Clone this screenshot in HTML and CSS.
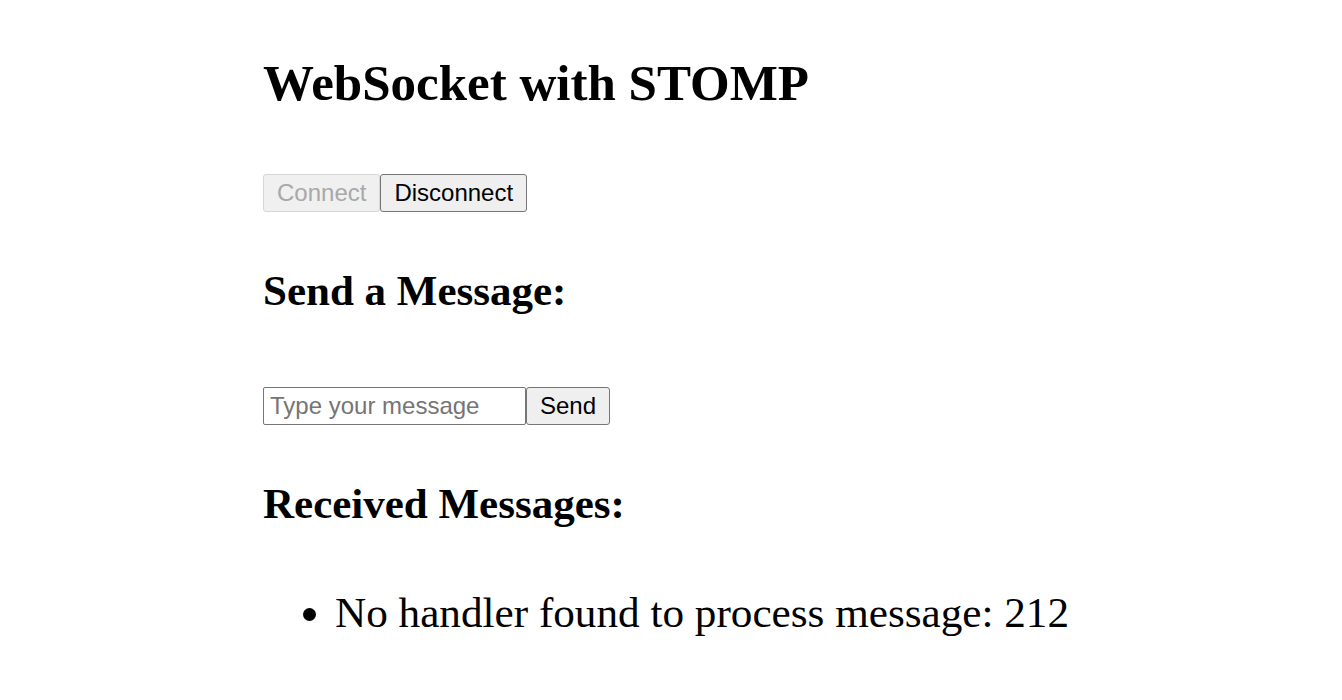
FILE: index.html
```html
<!DOCTYPE html>
<html lang="en">
<head>
<meta charset="utf-8">
<title>WebSocket with STOMP</title>
<link rel="stylesheet" href="styles.css">
</head>
<body>
<div class="page">
  <h1 class="title">WebSocket with STOMP</h1>
  <div class="row controls"><button class="btn" disabled>Connect</button><button class="btn">Disconnect</button></div>
  <h2 class="section">Send a Message:</h2>
  <div class="row sender"><input class="msg-input" type="text" placeholder="Type your message"><button class="btn">Send</button></div>
  <h2 class="section received">Received Messages:</h2>
  <ul class="messages">
    <li class="message">No handler found to process message: 212</li>
  </ul>
</div>
</body>
</html>
```
FILE: styles.css
```css
html, body {
  margin: 0;
  padding: 0;
  background: #ffffff;
}
body {
  font-family: "Liberation Serif", "Times New Roman", serif;
  color: #000000;
}
.page {
  width: 816px;
  margin: 0 auto;
  padding-top: 54px;
}
.title {
  margin: 0;
  font-size: 51px;
  line-height: 58px;
  font-weight: bold;
}
.row {
  display: flex;
  align-items: flex-start;
}
.controls {
  margin-top: 62px;
}
.btn {
  font-family: "Liberation Sans", Arial, sans-serif;
  font-size: 24px;
  line-height: 28px;
  padding: 4px 13px;
  margin: 0;
  border: 1px solid #767676;
  border-radius: 3px;
  background: #efefef;
  color: #000000;
}
.btn:disabled {
  background: #f0f0f0;
  border-color: #d6d6d6;
  color: #a8a8a8;
}
.section {
  margin: 54px 0 0;
  font-size: 43px;
  line-height: 50px;
  font-weight: bold;
}
.sender {
  margin-top: 71px;
}
.msg-input {
  box-sizing: border-box;
  width: 263px;
  height: 38px;
  margin: 0;
  padding: 0 6px;
  border: 1px solid #767676;
  border-radius: 2px;
  font-family: "Liberation Sans", Arial, sans-serif;
  font-size: 24px;
  color: #000000;
  background: #ffffff;
}
.msg-input::placeholder {
  color: #757575;
}
.messages {
  margin: 59px 0 0;
  padding-left: 72px;
}
.message {
  font-size: 43.2px;
  line-height: 50px;
}
```
